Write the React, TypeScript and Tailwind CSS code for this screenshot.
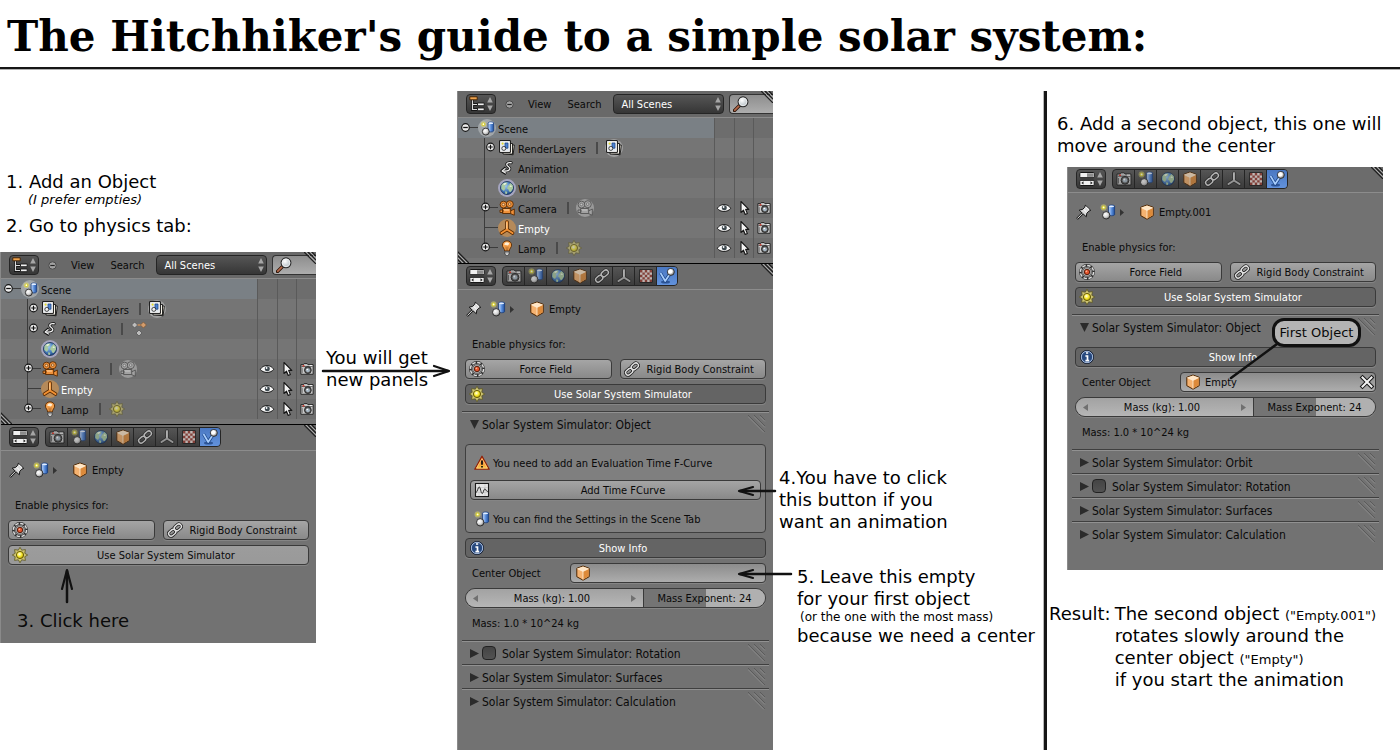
import type { ReactNode } from "react";

type IconProps = { className?: string };

function Svg({ children, className = "size-4" }: { children: ReactNode; className?: string }) {
  return (
    <svg viewBox="0 0 16 16" className={"shrink-0 " + className} fill="none" aria-hidden="true">
      {children}
    </svg>
  );
}

/* Gradients shared by all icons of the page */
function IconDefs() {
  return (
    <svg className="absolute size-0" aria-hidden="true">
      <defs>
        <linearGradient id="g-blue" x1="0" x2="1" y1="0" y2="0">
          <stop offset="0" stopColor="#cfe2ff" />
          <stop offset="0.5" stopColor="#5b8fdc" />
          <stop offset="1" stopColor="#1f4f9e" />
        </linearGradient>
        <radialGradient id="g-ball" cx="0.38" cy="0.35" r="0.7">
          <stop offset="0" stopColor="#ffffff" />
          <stop offset="0.55" stopColor="#d8d8d8" />
          <stop offset="1" stopColor="#6e6e6e" />
        </radialGradient>
        <radialGradient id="g-sun" cx="0.42" cy="0.38" r="0.65">
          <stop offset="0" stopColor="#fffef0" />
          <stop offset="0.5" stopColor="#f8ea30" />
          <stop offset="1" stopColor="#b09a00" />
        </radialGradient>
        <radialGradient id="g-world" cx="0.4" cy="0.35" r="0.75">
          <stop offset="0" stopColor="#9cc8f4" />
          <stop offset="0.6" stopColor="#3f73b4" />
          <stop offset="1" stopColor="#173a70" />
        </radialGradient>
        <radialGradient id="g-lens" cx="0.4" cy="0.35" r="0.7">
          <stop offset="0" stopColor="#ffffff" />
          <stop offset="1" stopColor="#a9b4bb" />
        </radialGradient>
        <linearGradient id="g-warn" x1="0" x2="0" y1="0" y2="1">
          <stop offset="0" stopColor="#e8501c" />
          <stop offset="1" stopColor="#ffd24a" />
        </linearGradient>
      </defs>
    </svg>
  );
}

const SceneIcon = ({ className }: IconProps) => (
  <Svg className={className}>
    <circle cx="3.6" cy="3.4" r="3.1" fill="#e9e36a" opacity="0.45" />
    <circle cx="3.6" cy="3.4" r="1.9" fill="#d9d02c" />
    <circle cx="3.6" cy="3.4" r="0.9" fill="#fffff0" />
    <path d="M8.6 2.2c0-1.500 6-1.500 6 0v8.300c0 1.600-6 1.600-6 0z" fill="url(#g-blue)" stroke="#1c3f7d" strokeWidth="0.9" />
    <ellipse cx="11.6" cy="2.300" rx="2.500" ry="0.900" fill="#e4efff" />
    <circle cx="6.200" cy="11.300" r="3.700" fill="url(#g-ball)" stroke="#262626" strokeWidth="0.9" />
  </Svg>
);

const LayersIcon = ({ className }: IconProps) => (
  <Svg className={className}>
    <path d="M7 5h8.300l-1.200 9.800-9-1.200z" fill="#efe9da" stroke="#111" strokeWidth="0.9" />
    <path d="M4 3.500h9.500v10.500H4z" fill="#f6f2e8" stroke="#111" strokeWidth="0.9" />
    <path d="M.6.6h10.800v11.800H.6z" fill="#fff" stroke="#111" strokeWidth="1" />
    <path d="M2.200 2.200h7.600v8.600H2.200z" fill="#dfe6ee" />
    <path d="M6 3h3v5.200H6z" fill="#4a83d4" stroke="#1c3f7d" strokeWidth="0.7" />
    <circle cx="3.600" cy="3.600" r="1.100" fill="#e8dc2a" />
    <circle cx="4.800" cy="8.400" r="2" fill="#eee" stroke="#222" strokeWidth="0.8" />
  </Svg>
);

const AnimIcon = ({ className }: IconProps) => (
  <Svg className={className}>
    <path d="M12.800 2c-5-.8-6.500 2-3.400 4.300 3.800 2.800 1.600 5.200-5.600 5.200" stroke="#111" strokeWidth="3.200" strokeLinecap="round" />
    <path d="M6.500 7.500 2 11.500l5 3.200" stroke="#111" strokeWidth="3" strokeLinejoin="round" />
    <path d="M12.800 2c-5-.8-6.500 2-3.400 4.300 3.800 2.800 1.600 5.200-5.600 5.200" stroke="#eee" strokeWidth="1.500" strokeLinecap="round" />
    <path d="M6.300 8.300 2.400 11.500l4.400 2.600" stroke="#eee" strokeWidth="1.300" strokeLinejoin="round" />
  </Svg>
);

const KeysIcon = ({ className }: IconProps) => (
  <Svg className={className}>
    <path d="M4 4h8" stroke="#c08a5c" strokeWidth="1.600" />
    <path d="M3.600 1 6.600 4 3.600 7 .6 4zM8 9l3 3-3 3-3-3z" fill="#bcbcbc" stroke="#555" strokeWidth="0.8" />
    <path d="M12.400 1 15.400 4 12.400 7 9.400 4z" fill="#d39c6c" stroke="#7c5a3c" strokeWidth="0.8" />
  </Svg>
);

const WorldIcon = ({ className }: IconProps) => (
  <Svg className={className}>
    <circle cx="8" cy="8" r="6.500" fill="url(#g-world)" stroke="#142c50" strokeWidth="0.8" />
    <path d="M2.500 5C4.500 2.300 7 2.200 8.500 2.800L7.500 5 5.500 6l1 2-1.500 3L2.300 9zM9 6l2.500-3 2.300 2.300.3 3.200-2.300 3.500-1.800-.5-.5-2L8 8.500zM6.500 11l1.800 1-.5 2-1.800-.6z" fill="#a9c9a0" />
    <path d="M4 4.300c1-1.200 2.200-1.400 3.300-1L6 5zM10.500 7l1-1.800 1.700 1.400z" fill="#eef6e2" />
  </Svg>
);

const MovieCamera = ({ className, gray }: IconProps & { gray?: boolean }) => {
  const fill = gray ? "#a2a2a2" : "#f0913a";
  const hi = gray ? "#c6c6c6" : "#ffd7a6";
  const line = gray ? "#555" : "#5a2a00";
  return (
    <Svg className={className}>
      <path d="M10.500 11.500 15.300 9v6.200l-4.800-2z" fill={fill} stroke={line} strokeWidth="0.9" />
      <path d="M3.500 8.500h8.200v5H3.500zM1 10h3v2.500H1z" fill={fill} stroke={line} strokeWidth="0.9" />
      <circle cx="4.500" cy="4.600" r="3.400" fill={fill} stroke={line} strokeWidth="0.9" />
      <circle cx="10.800" cy="4.200" r="3.500" fill={fill} stroke={line} strokeWidth="0.9" />
      <circle cx="4.400" cy="4.500" r="1.300" fill={hi} stroke={line} strokeWidth="0.6" />
      <circle cx="10.700" cy="4.100" r="1.300" fill={hi} stroke={line} strokeWidth="0.6" />
      <path d="M5 10h5" stroke={hi} strokeWidth="1" />
    </Svg>
  );
};

const AxesIcon = ({ className, orange }: IconProps & { orange?: boolean }) => (
  <Svg className={className}>
    <path d="M8 2v7.500L2.500 13M8 9.500l5.500 3.500" stroke={orange ? "#5a2a00" : "#2a2a2a"} strokeWidth="3.600" strokeLinecap="round" strokeLinejoin="round" />
    <path d="M8 2v7.500L2.500 13M8 9.500l5.500 3.500" stroke={orange ? "#f39233" : "#b8b8b8"} strokeWidth="2" strokeLinecap="round" strokeLinejoin="round" />
    <path d="M7.800 2.200v6.500" stroke={orange ? "#ffdcae" : "#ececec"} strokeWidth="0.9" />
  </Svg>
);

const BulbIcon = ({ className }: IconProps) => (
  <Svg className={className}>
    <path d="M8 .8c-3 0-4.600 2.200-4.600 4.300C3.400 7.500 5.500 8.300 5.700 11h4.600c.2-2.700 2.300-3.500 2.300-5.900C12.600 3 11 .8 8 .8z" fill="#f5a04c" stroke="#5a2a00" strokeWidth="0.9" />
    <path d="M5.200 4.800C5.400 3 6.800 2.200 8 2.300c1.200 0 2 .7 2.300 1.700L8.500 5.500 7 5z" fill="#fff1d8" />
    <path d="M7 6.500 7.400 11M9 6.500 8.600 11" stroke="#8a4a10" strokeWidth="0.6" />
    <path d="M5.800 11.300h4.400v2.800L8.800 15.400H7.200l-1.400-1.300z" fill="#ddd" stroke="#333" strokeWidth="0.800" />
    <path d="M6 12.800h4" stroke="#555" strokeWidth="0.700" />
  </Svg>
);

const SunIcon = ({ className, faded }: IconProps & { faded?: boolean }) => (
  <Svg className={className}>
    <g opacity={faded ? 0.6 : 1}>
      <path
        d="M8 .3 9.700 3.200 13.400 2.600 12.800 6.300 15.700 8 12.800 9.700 13.400 13.400 9.700 12.800 8 15.700 6.300 12.800 2.600 13.400 3.200 9.700.3 8 3.200 6.300 2.600 2.600 6.300 3.200z"
        fill="#cfc676"
        stroke="#5a5420"
        strokeWidth="0.800"
      />
      <circle cx="8" cy="8" r="3.600" fill="url(#g-sun)" stroke="#5c5000" strokeWidth="0.900" />
    </g>
  </Svg>
);

const EyeIcon = ({ className }: IconProps) => (
  <Svg className={className}>
    <path d="M1.300 8.300C4 3.300 12 3.300 14.700 8.300 12 12.500 4 12.500 1.300 8.300z" fill="#f8f8f8" stroke="#1a1a1a" strokeWidth="1" />
    <circle cx="8.300" cy="7.700" r="2.500" fill="#3f4a50" />
    <circle cx="7.600" cy="7" r="0.900" fill="#fff" />
  </Svg>
);

const PointerIcon = ({ className }: IconProps) => (
  <Svg className={className}>
    <path d="M5 1.500v11l2.500-2.300 1.700 4.300 2.200-.9-1.800-4.200h3.200z" fill="#f4f4f4" stroke="#161616" strokeWidth="1.100" strokeLinejoin="round" />
  </Svg>
);

const PhotoIcon = ({ className }: IconProps) => (
  <Svg className={className}>
    <path d="M1 3h3l.8-1.200h3.400L9 3h6v11H1z" fill="#c9c9c9" stroke="#1a1a1a" strokeWidth="1" />
    <path d="M1.600 5.200h12.800" stroke="#4a4a4a" strokeWidth="1" />
    <path d="M2.500 7v5.500" stroke="#666" strokeWidth="1" />
    <circle cx="9" cy="9.300" r="3.900" fill="#5c5c5c" stroke="#1a1a1a" strokeWidth="0.900" />
    <circle cx="9" cy="9.300" r="2.300" fill="#a7b7c4" />
    <circle cx="8.300" cy="8.500" r="0.900" fill="#fff" />
    <path d="M3 3.600h2v1.500H3z" fill="#e03020" />
    <path d="M11 3.600h3v1.100h-3z" fill="#fff" />
  </Svg>
);

const CubeIcon = ({ className }: IconProps) => (
  <Svg className={className}>
    <path d="M8 1 14.200 3.300v8.400L8 15.200 1.800 11.700V3.300z" fill="#f5b270" stroke="#4a2400" strokeWidth="1" strokeLinejoin="round" />
    <path d="M8 1.600 13.600 3.600 8 6.400 2.400 3.600z" fill="#ffe6c6" />
    <path d="M8 6.500v8l5.600-3.200V3.900z" fill="#dd8a3a" />
    <path d="M8 6.400v8.100M2.400 3.700 8 6.400l5.600-2.700" stroke="#fff0da" strokeWidth="0.800" />
  </Svg>
);

const ChainIcon = ({ className }: IconProps) => (
  <Svg className={className}>
    <g strokeLinecap="round">
      <rect x="-3.900" y="-2.500" width="7.800" height="5" rx="2.500" transform="translate(5.200 10.700) rotate(-40)" stroke="#222" strokeWidth="3" />
      <rect x="-3.900" y="-2.500" width="7.800" height="5" rx="2.500" transform="translate(10.800 5.400) rotate(-40)" stroke="#222" strokeWidth="3" />
      <rect x="-3.900" y="-2.500" width="7.800" height="5" rx="2.500" transform="translate(5.200 10.700) rotate(-40)" stroke="#e2e2e2" strokeWidth="1.400" />
      <rect x="-3.900" y="-2.500" width="7.800" height="5" rx="2.500" transform="translate(10.800 5.400) rotate(-40)" stroke="#e2e2e2" strokeWidth="1.400" />
    </g>
  </Svg>
);

const CheckerIcon = ({ className }: IconProps) => (
  <Svg className={className}>
    <path d="M1.500 1.500h13v13h-13z" fill="#efe4e0" stroke="#1e1e1e" strokeWidth="1" />
    <path
      d="M2 2h2.400v2.400H2zM6.800 2h2.400v2.400H6.800zM11.600 2H14v2.400h-2.400zM4.400 4.400h2.400v2.400H4.400zM9.200 4.400h2.400v2.400H9.200zM2 6.800h2.400v2.400H2zM6.800 6.800h2.400v2.400H6.800zM11.600 6.800H14v2.400h-2.400zM4.400 9.200h2.400v2.400H4.400zM9.200 9.200h2.400v2.400H9.200zM2 11.600h2.400V14H2zM6.800 11.600h2.400V14H6.800zM11.600 11.600H14V14h-2.400z"
      fill="#9c3d33"
    />
  </Svg>
);

const PhysicsIcon = ({ className }: IconProps) => (
  <Svg className={className}>
    <ellipse cx="6.500" cy="14" rx="4.500" ry="1.500" fill="#1b3f7c" opacity="0.7" />
    <path d="M1.500 5 6.200 13 10.500 6.500" stroke="#1d4688" strokeWidth="3.200" strokeLinejoin="round" />
    <path d="M1.500 5 6.200 13 10.500 6.500" stroke="#a8cdfb" strokeWidth="1.700" strokeLinejoin="round" />
    <circle cx="11.800" cy="3.900" r="3.500" fill="url(#g-ball)" stroke="#222" strokeWidth="0.800" />
    <circle cx="11.300" cy="3.400" r="1.900" fill="#fff" />
  </Svg>
);

const ForceIcon = ({ className }: IconProps) => (
  <Svg className={className}>
    <circle cx="8" cy="8" r="6.600" stroke="#2c2c2c" strokeWidth="2.600" />
    <circle cx="8" cy="8" r="6.600" stroke="#dedede" strokeWidth="1.500" strokeDasharray="3.600 1.580" />
    <circle cx="8" cy="8" r="4.300" fill="#b9b9b9" stroke="#5a5a5a" strokeWidth="0.900" />
    <circle cx="8" cy="8" r="2.700" fill="#e0532c" stroke="#4c1606" strokeWidth="0.900" />
    <circle cx="7.400" cy="7.300" r="0.900" fill="#ffb092" />
  </Svg>
);

const WarningIcon = ({ className }: IconProps) => (
  <Svg className={className}>
    <path d="M8 1.200 15.200 14.200H.8z" fill="url(#g-warn)" stroke="#8e1f08" strokeWidth="1.200" strokeLinejoin="round" />
    <path d="M8 3.600 13.400 13.200H2.600z" stroke="#ffd68a" strokeWidth="0.700" />
    <path d="M8 5.500v4.300M8 11v1.500" stroke="#111" strokeWidth="1.800" />
  </Svg>
);

const CurveIcon = ({ className }: IconProps) => (
  <Svg className={className}>
    <path d="M1.500 1.500h13v13h-13z" fill="#e6e6e6" stroke="#1a1a1a" strokeWidth="1.100" />
    <path d="M2 5.500h12M2 10.500h12M5 2v12M11 2v12" stroke="#c3c3c3" strokeWidth="0.600" />
    <path d="M2 10.500c1.500 0 1.800-5.500 3.200-5.500s1.600 6.500 3 6.500 1.200-4.500 2.600-4.500 1 2.500 3 2.500" stroke="#2a2a2a" strokeWidth="1" />
  </Svg>
);

const InfoIcon = ({ className }: IconProps) => (
  <Svg className={className}>
    <circle cx="8" cy="8" r="6.600" fill="#27497f" stroke="#10182a" strokeWidth="0.800" />
    <circle cx="8" cy="8" r="5.700" stroke="#b8cbe8" strokeWidth="0.900" />
    <path d="M7 4h2.200M6.400 7h2.100v4.600M6.400 11.600h3.800" stroke="#fff" strokeWidth="1.700" />
  </Svg>
);

const PinIcon = ({ className }: IconProps) => (
  <Svg className={className}>
    <path d="M1 15 6.300 9.500" stroke="#161616" strokeWidth="2.400" />
    <path d="M9.300 1.200 14.800 6.300 12.800 7.200 10.800 9.300 10.300 12.800 3.200 6.200 6.600 5.400 8.700 3.300z" fill="#dcdcdc" stroke="#161616" strokeWidth="1" strokeLinejoin="round" />
    <path d="M8 5.600 10.500 8M10 2.800l3 2.800" stroke="#fff" strokeWidth="1" />
    <path d="M1.300 14.600 6.300 9.500" stroke="#e8e8e8" strokeWidth="1" />
  </Svg>
);

const TreeIcon = ({ className }: IconProps) => (
  <Svg className={className}>
    <path d="M3.500 4v9.500H8M3.500 8.500H8" stroke="#161616" strokeWidth="3" />
    <path d="M3.500 4v9.500H8M3.500 8.500H8" stroke="#dcdcdc" strokeWidth="1.200" />
    <path d="M.8.800h7.400v3H.8z" fill="#f0a44e" stroke="#3b1d00" strokeWidth="0.900" />
    <path d="M8.500 7h6.700v2.700H8.500zM8.500 12h6.700v2.700H8.500z" fill="#f2f2f2" stroke="#161616" strokeWidth="0.900" />
  </Svg>
);

const TogglesIcon = ({ className }: IconProps) => (
  <Svg className={className}>
    <rect x="0.800" y="1.500" width="14.400" height="5.200" rx="1" fill="#f0f0f0" stroke="#161616" />
    <path d="M8 2.300h6v3.600H8z" fill="#8c8c8c" />
    <rect x="0.800" y="9.300" width="14.400" height="5.200" rx="1" fill="#f0f0f0" stroke="#161616" />
    <path d="M4.500 10.300 2.300 11.900l2.200 1.600zM11.500 10.300l2.200 1.600-2.200 1.600z" fill="#222" />
  </Svg>
);

const SearchIcon = ({ className }: IconProps) => (
  <Svg className={className}>
    <path d="M6.500 9.500 1.500 14.500" stroke="#2a1206" strokeWidth="3.200" strokeLinecap="round" />
    <path d="M5.800 10.200 1.800 14.200" stroke="#b5694a" strokeWidth="1.800" strokeLinecap="round" />
    <circle cx="10" cy="5.800" r="4.900" fill="url(#g-lens)" stroke="#2a2a2a" strokeWidth="1.100" />
    <circle cx="10" cy="5.800" r="3.900" stroke="#f8f8f8" strokeWidth="0.700" />
  </Svg>
);

const CloseIcon = ({ className }: IconProps) => (
  <Svg className={className}>
    <path d="m3.500 3.500 9 9M12.500 3.500l-9 9" stroke="#161616" strokeWidth="4" strokeLinecap="square" />
    <path d="m3.500 3.500 9 9M12.500 3.500l-9 9" stroke="#f4f4f4" strokeWidth="2" strokeLinecap="square" />
  </Svg>
);

const UpDown = () => (
  <svg viewBox="0 0 6 14" className="h-[14px] w-[6px] shrink-0" aria-hidden="true">
    <path d="M3 0 5.800 5.500H.2zM3 14 .2 8.500h5.600z" fill="#a6a6a6" />
  </svg>
);

const Minus = () => (
  <svg viewBox="0 0 9 9" className="size-[9px]" aria-hidden="true">
    <circle cx="4.500" cy="4.500" r="3.700" fill="#a2a2a2" stroke="#4a4a4a" />
    <path d="M2.300 4.500h4.400" stroke="#222" strokeWidth="1.200" />
  </svg>
);

/* Area corner widget */
const Corner = ({ className }: { className: string }) => (
  <svg viewBox="0 0 12 12" className={"pointer-events-none absolute size-3 " + className} aria-hidden="true">
    <path d="M0 0 12 12M4 0l8 8M8 0l4 4" stroke="#1e1e1e" strokeWidth="1.200" />
    <path d="M2 0l10 10M6 0l6 6" stroke="#b0b0b0" strokeWidth="0.900" />
  </svg>
);

const CornerLeft = () => (
  <svg viewBox="0 0 12 12" className="pointer-events-none absolute bottom-0 left-0 size-3" aria-hidden="true">
    <path d="M0 0 12 12M0 4l8 8M0 8l4 4" stroke="#1e1e1e" strokeWidth="1.200" />
    <path d="M0 2l10 10M0 6l6 6" stroke="#b0b0b0" strokeWidth="0.900" />
  </svg>
);

const Grip = () => (
  <svg viewBox="0 0 18 18" className="size-[18px] shrink-0" aria-hidden="true">
    <path d="M0 0 17 17M6 0l11 11M12 0l5 5" stroke="#5b5b5b" strokeWidth="1" />
    <path d="M0 1.500 16 17.500M6 1.500l11 11M12 1.500l5 5" stroke="#8f8f8f" strokeWidth="0.800" />
  </svg>
);

function Arrow({ d, head, viewBox, className }: { d: string; head: string; viewBox: string; className: string }) {
  return (
    <svg viewBox={viewBox} className={className} fill="none" aria-hidden="true">
      <path d={d} stroke="#111" strokeWidth="2.500" strokeLinecap="round" />
      <path d={head} stroke="#111" strokeWidth="2.200" strokeLinecap="round" strokeLinejoin="round" />
    </svg>
  );
}

/* ---------- Outliner ---------- */

type TreeItem = {
  name: string;
  icon: ReactNode;
  glow?: string;
  data?: ReactNode;
  dataGlow?: string;
  expander: "inner" | "outer" | "line" | "none";
  last?: boolean;
  selected?: boolean;
  toggles?: boolean;
};

const PlusMark = ({ x }: { x: number }) => (
  <>
    <circle cx={x} cy="9" r="3.800" fill="#eee" stroke="#161616" strokeWidth="1.200" />
    <path d={`M${x - 2.3} 9h4.600M${x} 6.700v4.600`} stroke="#111" strokeWidth="1.200" />
  </>
);

function TreeGutter({ item }: { item: TreeItem }) {
  return (
    <svg viewBox="0 0 41 20" className="h-5 w-[41px] shrink-0" fill="none" aria-hidden="true">
      <path d={item.last ? "M27.500 0v9" : "M27.500 0v20"} stroke="#3c3c3c" />
      {(item.expander === "outer" || item.expander === "line") && <path d="M27.500 9.500H41" stroke="#3c3c3c" />}
      {item.expander === "inner" && <PlusMark x={33.5} />}
      {item.expander === "outer" && <PlusMark x={28.5} />}
    </svg>
  );
}

function ToggleCells({ on }: { on?: boolean }) {
  return (
    <div className="flex w-[59px] shrink-0 self-stretch">
      {[EyeIcon, PointerIcon, PhotoIcon].map((Icon, i) => (
        <div key={i} className="flex w-5 items-center justify-center border-l border-[#5a5a5a]">
          {on && (
            <button aria-label={["Visible", "Selectable", "Renderable"][i]} className="flex">
              <Icon className={i === 2 ? "size-[14px]" : "size-4"} />
            </button>
          )}
        </div>
      ))}
    </div>
  );
}

function Outliner({ animated }: { animated?: boolean }) {
  const items: TreeItem[] = [
    { name: "RenderLayers", icon: <LayersIcon />, data: <LayersIcon />, dataGlow: "bg-white/30", expander: "inner" },
    { name: "Animation", icon: <AnimIcon className="size-[14px]" />, data: animated && <KeysIcon />, expander: animated ? "inner" : "none" },
    { name: "World", icon: <WorldIcon />, glow: "bg-[#a5a5c0]", expander: "none" },
    { name: "Camera", icon: <MovieCamera />, data: <MovieCamera gray />, dataGlow: "bg-white/30", expander: "outer", toggles: true },
    { name: "Empty", icon: <AxesIcon orange />, glow: "bg-[#b58a5a]", expander: "line", selected: true, toggles: true },
    { name: "Lamp", icon: <BulbIcon />, data: <SunIcon faded />, expander: "outer", last: true, toggles: true },
  ];
  return (
    <section className="relative overflow-hidden border-b border-black bg-[#757575] pb-[5px]">
      <Corner className="top-0 right-0" />
      <div className="flex h-[27px] items-start border-b border-[#8c8c8c] bg-[#696969] pt-[3px] pl-[9px]">
        <button aria-label="Editor type" className="flex h-5 w-[30px] shrink-0 items-center justify-between rounded border border-[#252525] bg-linear-to-b from-[#565656] to-[#363636] px-[2px]">
          <TreeIcon className="size-4" />
          <UpDown />
        </button>
        <button aria-label="Collapse menus" className="ml-[9px] flex h-5 items-center">
          <Minus />
        </button>
        <button className="ml-[14px] h-5 pt-[2px]">View</button>
        <button className="ml-4 h-5 pt-[2px]">Search</button>
        <span className="relative ml-3 flex h-5 w-[111px] shrink-0">
          <select aria-label="Display mode" className="w-full appearance-none rounded border border-[#252525] bg-linear-to-b from-[#565656] to-[#363636] pt-[2px] pl-[7px] text-[11px] text-white">
            <option>All Scenes</option>
          </select>
          <span className="pointer-events-none absolute top-[3px] right-[3px] flex">
            <UpDown />
          </span>
        </span>
        <label className="ml-[5px] flex h-5 min-w-0 flex-1 items-center rounded-l border border-r-0 border-[#333] bg-linear-to-b from-[#8e8e8e] to-[#adadad] pl-[3px]">
          <SearchIcon />
          <input aria-label="Filter" className="w-0 min-w-0 flex-1 bg-transparent outline-none" />
        </label>
      </div>
      <ul>
        <li className="flex h-5 items-center bg-[#6d6d6d]">
          <div className="flex h-5 flex-1 items-center bg-[#7a8085]">
            <svg viewBox="0 0 21 20" className="h-5 w-[21px]" fill="none" aria-hidden="true">
              <path d="M12 9.500h9" stroke="#3c3c3c" />
              <circle cx="8.500" cy="9.500" r="3.800" fill="#eee" stroke="#161616" strokeWidth="1.200" />
              <path d="M6.200 9.500h4.600" stroke="#111" strokeWidth="1.300" />
            </svg>
            <span className="flex size-[18px] items-center justify-center rounded-full bg-white/30">
              <SceneIcon className="size-[15px]" />
            </span>
            <span className="pt-[3px] pl-[2px]">Scene</span>
          </div>
          <ToggleCells />
        </li>
        {items.map((item) => (
          <li key={item.name} className="flex h-5 items-center odd:bg-[#6e6e6e] even:bg-[#757575]">
            <div className="flex h-5 flex-1 items-center">
              <TreeGutter item={item} />
              <span className={"flex size-[18px] items-center justify-center rounded-full " + (item.glow ?? "")}>{item.icon}</span>
              <span className={"pt-[3px] pl-[2px] " + (item.selected ? "text-white" : "")}>{item.name}</span>
              {item.data && (
                <>
                  <span className="ml-[10px] h-3 w-[2px] bg-[#4a4a4a]" />
                  <span className={"ml-[7px] flex size-[18px] items-center justify-center rounded-full " + (item.dataGlow ?? "")}>{item.data}</span>
                </>
              )}
            </div>
            <ToggleCells on={item.toggles} />
          </li>
        ))}
      </ul>
      <CornerLeft />
    </section>
  );
}

/* ---------- Properties editor ---------- */

const TABS: [string, ReactNode][] = [
  ["Render", <PhotoIcon />],
  ["Scene", <SceneIcon />],
  ["World", <WorldIcon />],
  ["Object", <CubeIcon />],
  ["Constraints", <ChainIcon />],
  ["Object data", <AxesIcon />],
  ["Texture", <CheckerIcon />],
];

function ToolButton({ icon, label, look = "normal" }: { icon: ReactNode; label: string; look?: "normal" | "hover" | "pressed" }) {
  const looks = {
    normal: "bg-linear-to-b from-[#a5a5a5] to-[#898989]",
    hover: "bg-linear-to-b from-[#9c9c9c] to-[#999999]",
    pressed: "bg-[#646464] text-white",
  };
  return (
    <button className={"flex h-5 w-full items-center rounded border border-[#3a3a3a] pr-1 pl-[3px] shadow-[0_1px_0_#858585] " + looks[look]}>
      {icon}
      <span className="flex-1 pt-[2px] text-center whitespace-nowrap">{label}</span>
    </button>
  );
}

function PanelSection({ title, open, checkbox, children }: { title: string; open?: boolean; checkbox?: boolean; children?: ReactNode }) {
  return (
    <section className="mr-1 ml-[5px] border-t border-[#3f3f3f]">
      <div className="flex h-[23px] items-center border-t border-[#919191] pr-[3px] pl-2">
        <button aria-expanded={!!open} aria-label={title} className="flex w-3">
          <svg viewBox="0 0 9 9" className="size-[9px]" aria-hidden="true">
            <path d={open ? "M0 0h9L4.500 9z" : "M0 0v9l9-4.500z"} fill="#2b2b2b" />
          </svg>
        </button>
        {checkbox && (
          <input type="checkbox" aria-label={title} className="mr-[6px] size-[14px] appearance-none rounded border border-[#222] bg-linear-to-b from-[#444] to-[#525252]" />
        )}
        <h3 className="flex-1 pt-[2px] text-[12px] whitespace-nowrap">{title}</h3>
        <Grip />
      </div>
      {children && <div className="mr-[3px] ml-[3px] flex flex-col gap-[5px] pt-[9px] pb-2">{children}</div>}
    </section>
  );
}

function ObjectSettings({ center, id }: { center?: string; id: string }) {
  return (
    <>
      <ToolButton icon={<InfoIcon />} label="Show Info" look="pressed" />
      <div className="flex h-5 items-center">
        <label htmlFor={id + "-center"} className="w-[105px] pt-[2px] pl-[7px]">
          Center Object
        </label>
        <div className="flex h-5 flex-1 items-center gap-1 rounded border border-[#3a3a3a] bg-linear-to-b from-[#8c8c8c] to-[#adadad] pl-1 shadow-[0_1px_0_#858585]">
          <CubeIcon />
          <input id={id + "-center"} defaultValue={center} className="w-0 min-w-0 flex-1 bg-transparent pt-[2px] outline-none" />
          {center && (
            <button aria-label="Clear" className="flex">
              <CloseIcon />
            </button>
          )}
        </div>
      </div>
      <div className="flex h-5 overflow-hidden rounded-full border border-[#3a3a3a] shadow-[0_1px_0_#858585]">
        <div className="flex w-[178px] items-center border-r border-[#3a3a3a] bg-linear-to-b from-[#a2a2a2] to-[#b6b6b6] px-[7px]">
          <button aria-label="Decrease" className="flex">
            <svg viewBox="0 0 5 7" className="h-[7px] w-[5px]">
              <path d="M5 0v7L0 3.500z" fill="#707070" />
            </svg>
          </button>
          <label htmlFor={id + "-mass"} className="flex-1 pt-[2px] text-right">
            Mass (kg):
          </label>
          <input id={id + "-mass"} defaultValue="1.00" className="w-[66px] bg-transparent pt-[2px] pl-[3px] outline-none" />
          <button aria-label="Increase" className="flex">
            <svg viewBox="0 0 5 7" className="h-[7px] w-[5px]">
              <path d="M0 0v7l5-3.500z" fill="#707070" />
            </svg>
          </button>
        </div>
        <div className="relative flex flex-1">
          <input
            id={id + "-exp"}
            type="range"
            min={0}
            max={48}
            defaultValue={24}
            className="h-full w-full appearance-none bg-[linear-gradient(90deg,#747474_51%,#b0b0b0_51%)] [&::-webkit-slider-thumb]:appearance-none"
          />
          <label htmlFor={id + "-exp"} className="pointer-events-none absolute inset-0 pt-[2px] text-center">
            Mass Exponent: 24
          </label>
        </div>
      </div>
      <p className="mt-[3px] pl-[7px]">Mass: 1.0 * 10^24 kg</p>
    </>
  );
}

function Properties({ object, simulator, children }: { object: string; simulator: "hover" | "pressed"; children?: ReactNode }) {
  return (
    <section className="relative flex-1 bg-[#727272]">
      <Corner className="top-0 right-0" />
      <div className="flex h-[26px] items-start gap-[6px] border-b border-[#8c8c8c] bg-[#6c6c6c] pt-[2px] pl-[9px]">
        <button aria-label="Editor type" className="flex h-5 w-[30px] items-center justify-between rounded border border-[#252525] bg-linear-to-b from-[#565656] to-[#363636] px-[2px]">
          <TogglesIcon />
          <UpDown />
        </button>
        <div className="flex h-5 overflow-hidden rounded border border-[#252525] bg-linear-to-b from-[#565656] to-[#3c3c3c]">
          {TABS.map(([name, icon]) => (
            <button key={name} aria-label={name} className="flex w-[22px] items-center justify-center border-r border-[#252525]">
              <span className="flex opacity-70">{icon}</span>
            </button>
          ))}
          <button aria-label="Physics" aria-pressed="true" className="flex w-5 items-center justify-center bg-linear-to-b from-[#4a78c2] to-[#6292dc]">
            <PhysicsIcon />
          </button>
        </div>
      </div>
      <div className="mt-[11px] flex h-4 items-center pl-[9px]">
        <PinIcon />
        <span className="ml-2 flex">
          <SceneIcon />
        </span>
        <svg viewBox="0 0 4 7" className="ml-1 h-[7px] w-1" aria-hidden="true">
          <path d="M0 0v7l4-3.500z" fill="#333" />
        </svg>
        <span className="ml-[15px] flex">
          <CubeIcon />
        </span>
        <span className="pt-[2px] pl-1">{object}</span>
      </div>
      <p className="mt-5 pl-[15px]">Enable physics for:</p>
      <div className="mt-[6px] mb-[7px] grid grid-cols-2 gap-x-2 gap-y-[5px] pr-[7px] pl-2">
        <ToolButton icon={<ForceIcon />} label="Force Field" />
        <ToolButton icon={<ChainIcon />} label="Rigid Body Constraint" />
        <div className="col-span-2">
          <ToolButton icon={<SunIcon />} label="Use Solar System Simulator" look={simulator} />
        </div>
      </div>
      {children}
    </section>
  );
}

const UI =
  "relative flex flex-col bg-[#727272] font-['DejaVu_Sans_Condensed','DejaVu_Sans',sans-serif] text-[11px] leading-4 text-[#0a0a0a] after:absolute after:inset-y-0 after:left-0 after:w-px after:bg-[#8a8a8a]";

export default function App() {
  return (
    <div className="flex min-h-screen flex-col bg-white font-['DejaVu_Sans',sans-serif] text-[18px] leading-[22px] text-black">
      <IconDefs />
      <header className="border-b border-[#b0b0b0]">
        <div className="border-b-2 border-b-[#161616] px-[7px] pt-3 pb-[6px]">
          <h1 className="font-['DejaVu_Serif',serif] text-[42px] leading-[49px] font-bold whitespace-nowrap">
            The Hitchhiker's guide to a simple solar system:
          </h1>
        </div>
      </header>
      <main className="grid flex-1 grid-cols-[316fr_141fr_316fr_270fr_357fr] pt-[21px]">
        <div className="pt-20">
          <p className="pl-[6px]">1. Add an Object</p>
          <p className="pl-7 text-[13px] leading-[14px] italic">(I prefer empties)</p>
          <p className="mt-2 mb-[15px] pl-[6px]">2. Go to physics tab:</p>
          <div className={UI}>
            <Outliner animated />
            <Properties object="Empty" simulator="hover">
              <Arrow className="-mt-1 ml-[58px] h-9 w-[18px]" viewBox="0 0 18 36" d="M9 34V3" head="M4 21 9 2l5 19" />
              <p className="pt-[6px] pb-[11px] pl-[17px] font-['DejaVu_Sans',sans-serif] text-[18px] leading-[22px]">3. Click here</p>
            </Properties>
          </div>
        </div>

        <div className="relative mt-64 h-11 pl-[10px] whitespace-nowrap">
          <p>You will get</p>
          <p>new panels</p>
          <Arrow className="absolute top-[15px] left-[5px] h-4 w-[130px]" viewBox="0 0 130 16" d="M2 9h125" head="M113 4l15 5-15 5" />
        </div>

        <div className={UI}>
          <Outliner />
          <Properties object="Empty" simulator="pressed">
            <PanelSection title="Solar System Simulator: Object" open>
              <div className="rounded border border-[#3f3f3f] bg-[#7f7f7f] px-1 pt-[10px] pb-[5px]">
                <p className="flex h-4 items-center gap-[3px] pl-1 whitespace-nowrap">
                  <WarningIcon /> <span className="pt-[2px]">You need to add an Evaluation Time F-Curve</span>
                </p>
                <div className="mt-[9px] mb-[11px]">
                  <ToolButton icon={<CurveIcon />} label="Add Time FCurve" />
                </div>
                <p className="flex h-4 items-center gap-[3px] pl-1 whitespace-nowrap">
                  <SceneIcon /> <span className="pt-[2px]">You can find the Settings in the Scene Tab</span>
                </p>
              </div>
              <ObjectSettings id="first" />
            </PanelSection>
            <PanelSection title="Solar System Simulator: Rotation" checkbox />
            <PanelSection title="Solar System Simulator: Surfaces" />
            <PanelSection title="Solar System Simulator: Calculation" />
          </Properties>
        </div>

        <div className="pt-[376px] whitespace-nowrap">
          <div className="relative pl-[6px]">
            <p>4.You have to click</p>
            <p>this button if you</p>
            <p>want an animation</p>
            <Arrow className="absolute top-4 -left-9 h-4 w-[40px]" viewBox="0 0 40 16" d="M38 8H3" head="M16 4 2 8l14 4" />
          </div>
          <div className="relative mt-[33px] pl-6">
            <p>5. Leave this empty</p>
            <p>for your first object</p>
            <p className="pl-[3px] text-[12px] leading-[15px]">(or the one with the most mass)</p>
            <p>because we need a center</p>
            <Arrow className="absolute top-0 -left-9 h-4 w-[56px]" viewBox="0 0 56 16" d="M54 8H3" head="M16 4 2 8l14 4" />
          </div>
        </div>

        <div className="border-l border-[#b8b8b8]">
          <div className="h-full border-l-3 border-[#161616] pt-[22px] whitespace-nowrap">
            <div className="pl-[10px]">
              <p>6. Add a second object, this one will</p>
              <p>move around the center</p>
            </div>
            <div className={UI + " mt-[10px] mr-[17px] ml-5 min-h-[403px]"}>
              <Properties object="Empty.001" simulator="pressed">
                <PanelSection title="Solar System Simulator: Object" open>
                  <ObjectSettings id="second" center="Empty" />
                </PanelSection>
                <PanelSection title="Solar System Simulator: Orbit" />
                <PanelSection title="Solar System Simulator: Rotation" checkbox />
                <PanelSection title="Solar System Simulator: Surfaces" />
                <PanelSection title="Solar System Simulator: Calculation" />
              </Properties>
              <svg viewBox="0 0 50 38" className="absolute top-[175px] right-[104px] h-[38px] w-[50px]" aria-hidden="true">
                <path d="M48 2 2 36" stroke="#111" strokeWidth="2.500" strokeLinecap="round" />
              </svg>
              <span className="absolute top-[151px] right-[22px] flex h-[29px] w-[89px] items-center justify-center rounded-xl border-3 border-[#111] bg-[#b4b4b4] font-['DejaVu_Sans',sans-serif] text-[13px]">
                First Object
              </span>
            </div>
            <div className="mt-[33px] flex gap-1 pl-[2px]">
              <p>Result:</p>
              <div>
                <p>
                  The second object <span className="text-[13px] leading-none">("Empty.001")</span>
                </p>
                <p>rotates slowly around the</p>
                <p>
                  center object <span className="text-[13px] leading-none">("Empty")</span>
                </p>
                <p>if you start the animation</p>
              </div>
            </div>
          </div>
        </div>
      </main>
    </div>
  );
}
